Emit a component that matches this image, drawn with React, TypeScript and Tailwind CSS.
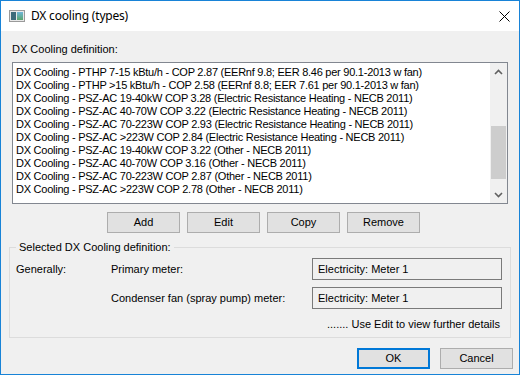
import React from 'react'

const rows = [
  'DX Cooling - PTHP 7-15 kBtu/h - COP 2.87 (EERnf 9.8; EER 8.46 per 90.1-2013 w fan)',
  'DX Cooling - PTHP >15 kBtu/h - COP 2.58 (EERnf 8.8; EER 7.61 per 90.1-2013 w fan)',
  'DX Cooling - PSZ-AC 19-40kW COP 3.28 (Electric Resistance Heating - NECB 2011)',
  'DX Cooling - PSZ-AC 40-70W COP 3.22 (Electric Resistance Heating - NECB 2011)',
  'DX Cooling - PSZ-AC 70-223W COP 2.93 (Electric Resistance Heating - NECB 2011)',
  'DX Cooling - PSZ-AC >223W COP 2.84 (Electric Resistance Heating - NECB 2011)',
  'DX Cooling - PSZ-AC 19-40kW COP 3.22 (Other - NECB 2011)',
  'DX Cooling - PSZ-AC 40-70W COP 3.16 (Other - NECB 2011)',
  'DX Cooling - PSZ-AC 70-223W COP 2.87 (Other - NECB 2011)',
  'DX Cooling - PSZ-AC >223W COP 2.78 (Other - NECB 2011)',
]

function Btn({ label, primary }: { label: string; primary?: boolean }) {
  return (
    <button
      className={`w-[73px] h-[21px] bg-[#e1e1e1] text-[11px] text-black leading-none ${
        primary ? 'border-2 border-[#0078d7]' : 'border border-[#adadad]'
      }`}
    >
      {label}
    </button>
  )
}

export default function App() {
  return (
    <div
      className="w-[520px] h-[375px] border border-[#1883d7] bg-[#f0f0f0] flex flex-col text-black"
      style={{ fontFamily: '"Liberation Sans", Arial, sans-serif' }}
    >
      {/* title bar */}
      <div className="h-[30px] bg-white flex items-center pl-2 pr-[9px] shrink-0">
        <div className="w-[16px] h-[12px] border border-[#9a9a9a] bg-[#e8e8e8] flex p-px gap-px">
          <div className="w-[5px] bg-[#3d6b7a]" />
          <div className="flex-1 bg-gradient-to-b from-[#6fb5d8] to-[#5aa46a]" />
        </div>
        <span className="ml-[6px] text-[12px] tracking-[-0.2px]" style={{ fontFamily: '"Noto Sans", sans-serif' }}>
          DX cooling (types)
        </span>
        <svg className="ml-auto" width="11" height="11" viewBox="0 0 11 11">
          <path d="M0.5 0.5 L10.5 10.5 M10.5 0.5 L0.5 10.5" stroke="#000" strokeWidth="1" />
        </svg>
      </div>

      <div className="flex flex-col px-[11px] pt-[12px] text-[11px]">
        <div className="leading-[13px] mb-[6px]">DX Cooling definition:</div>

        {/* list box */}
        <div className="h-[142px] border border-[#828790] bg-white flex">
          <div className="flex-1 pl-[3px] pt-[3px] tracking-[-0.25px]">
            {rows.map((r, i) => (
              <div key={i} className="h-[13px] leading-[13px] whitespace-nowrap">
                {r}
              </div>
            ))}
          </div>
          <div className="w-[17px] bg-[#f0f0f0] flex flex-col">
            <div className="h-[17px] flex items-center justify-center">
              <svg width="9" height="6" viewBox="0 0 9 6">
                <path d="M1 5 L4.5 1.5 L8 5" stroke="#606060" strokeWidth="1.6" fill="none" />
              </svg>
            </div>
            <div className="flex-1 flex flex-col pt-[46px] pb-[2px]">
              <div className="h-[53px] mx-px bg-[#cdcdcd]" />
            </div>
            <div className="h-[17px] flex items-center justify-center">
              <svg width="9" height="6" viewBox="0 0 9 6">
                <path d="M1 1 L4.5 4.5 L8 1" stroke="#606060" strokeWidth="1.6" fill="none" />
              </svg>
            </div>
          </div>
        </div>

        {/* buttons */}
        <div className="flex gap-[7px] pl-[95px] mt-[8px]">
          <Btn label="Add" />
          <Btn label="Edit" />
          <Btn label="Copy" />
          <Btn label="Remove" />
        </div>
      </div>

      {/* group box */}
      <div className="relative mx-[8px] mt-[14px] h-[91px] border border-[#dcdcdc] text-[11px]">
        <span className="absolute -top-[7px] left-[6px] px-[3px] bg-[#f0f0f0] leading-[13px]">
          Selected DX Cooling definition:
        </span>
        <div className="flex flex-col pt-[10px] pl-[6px] pr-[8px]">
          <div className="flex items-center h-[22px]">
            <span className="w-[95px]">Generally:</span>
            <span className="w-[201px]">Primary meter:</span>
            <div className="w-[190px] h-[22px] border border-[#7a7a7a] pl-[5px] flex items-center">
              Electricity: Meter 1
            </div>
          </div>
          <div className="flex items-center h-[22px] mt-[7px]">
            <span className="w-[95px]" />
            <span className="w-[201px]">Condenser fan (spray pump) meter:</span>
            <div className="w-[190px] h-[22px] border border-[#7a7a7a] pl-[5px] flex items-center">
              Electricity: Meter 1
            </div>
          </div>
          <div className="text-right mt-[9px] pr-[2px] leading-[13px]">....... Use Edit to view further details</div>
        </div>
      </div>

      <div className="flex justify-end gap-[10px] pr-[6px] mt-[10px]">
        <Btn label="OK" primary />
        <Btn label="Cancel" />
      </div>
    </div>
  )
}
